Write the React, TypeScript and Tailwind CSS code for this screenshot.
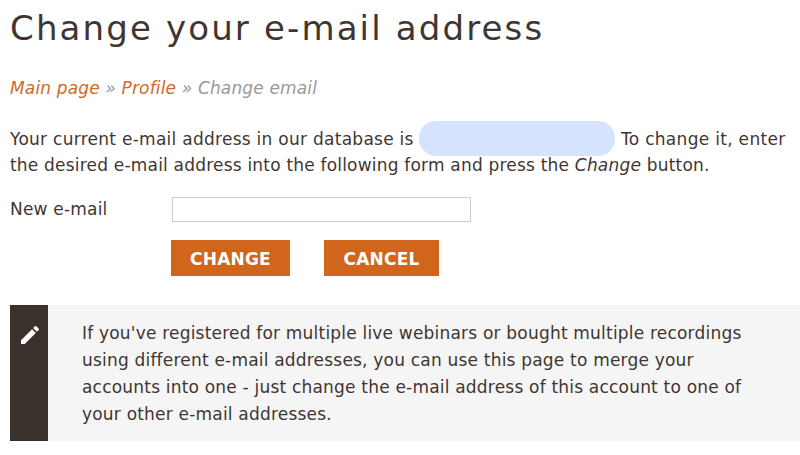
import React from "react";

const Sans = "font-['DejaVu_Sans',sans-serif]";

export default function App() {
  return (
    <div className={`${Sans} w-[800px] h-[455px] overflow-hidden bg-white text-[#3f3633] text-[17px] tracking-[0.2px] leading-[26px] pl-[10px]`}>
      <h1 className="text-[34px] leading-[40px] pt-[8px] h-[48px] font-normal tracking-[2.14px]">Change your e-mail address</h1>
      <p className="mt-[27px] italic text-[#999] tracking-[0.15px]"><a className="text-[#d2691e]">Main page</a> » <a className="text-[#d2691e]">Profile</a> » Change email</p>
      <p className="mt-[25px] w-[790px]">
        <span className="tracking-[0.27px]">Your current e-mail address in our database is</span> <span className="inline-block w-[196px] h-[35px] rounded-[17px] bg-[#d5e3fc] align-middle -mt-[8px] -mb-[4px]"></span> <span className="tracking-[0.3px]">To change it, enter</span> the desired e-mail address into the following form and press the <em>Change</em> button.
      </p>
      <div className="mt-[18px] flex items-center">
        <label className="w-[162px]">New e-mail</label>
        <input className="w-[299px] h-[25px] border border-[#ccc] bg-white" />
      </div>
      <div className="mt-[18px] ml-[161px] flex gap-[34px]">
        <button className="h-[36px] w-[119px] bg-[#d1651b] text-white font-bold tracking-[0.2px] pt-[1px]">CHANGE</button>
        <button className="h-[36px] w-[115px] bg-[#d1651b] text-white font-bold tracking-[0.2px] pt-[1px]">CANCEL</button>
      </div>
      <div className="mt-[29px] flex h-[136px] bg-[#f5f5f5]">
        <div className="w-[38px] bg-[#3a302c] flex justify-center pt-[18px] pl-[2px] shrink-0">
          <svg width="24" height="24" viewBox="0 0 24 24" fill="white"><path d="M3 17.25V21h3.75L17.81 9.94l-3.75-3.75L3 17.25zM20.71 7.04a1 1 0 0 0 0-1.41l-2.34-2.34a1 1 0 0 0-1.41 0l-1.83 1.83 3.75 3.75 1.83-1.83z"/></svg>
        </div>
        <p className="pl-[34px] pr-[40px] pt-[15px] leading-[27px]">If you've registered for multiple live webinars or bought multiple recordings using different e-mail addresses, you can use this page to merge your accounts into one - just change the e-mail address of this account to one of your other e-mail addresses.</p>
      </div>
    </div>
  );
}
